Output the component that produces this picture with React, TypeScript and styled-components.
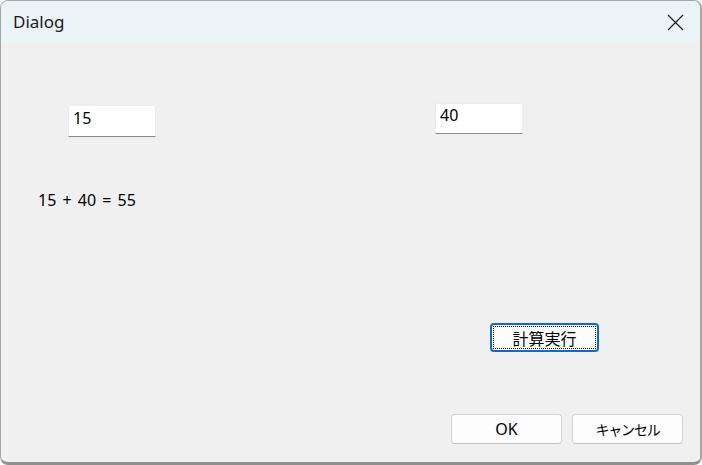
import React from 'react';
import styled, { createGlobalStyle } from 'styled-components';

const GlobalStyle = createGlobalStyle`
  html, body {
    margin: 0;
    padding: 0;
    background: #ffffff;
  }
  * {
    box-sizing: border-box;
  }
`;

const Window = styled.div`
  width: 702px;
  height: 465px;
  display: flex;
  flex-direction: column;
  background: #f0f0f0;
  border: 1px solid #a6a6a6;
  border-right-width: 2px;
  border-bottom: 3px solid #8f8f8f;
  border-radius: 8px;
  overflow: hidden;
  font-family: 'Noto Sans', 'Open Sans', sans-serif;
  color: #000;
`;

const TitleBar = styled.div`
  height: 43px;
  flex: none;
  display: flex;
  align-items: center;
  justify-content: space-between;
  padding: 0 16px 2px 12px;
  background: #ebf3f7;
`;

const Title = styled.span`
  font-size: 17px;
  color: #1b1b1b;
`;

const CloseButton = styled.button`
  width: 18px;
  height: 18px;
  padding: 0;
  border: none;
  background: transparent;
  display: flex;
  align-items: center;
  justify-content: center;
  margin-top: 2px;
`;

const Body = styled.div`
  flex: 1;
  display: flex;
  flex-direction: column;
  align-items: flex-start;
`;

const InputRow = styled.div`
  display: flex;
  align-items: flex-start;
  margin-top: 59px;
  padding-left: 67px;
`;

const NumberField = styled.input<{ $dy?: number; $gap?: number; $h?: number }>`
  width: 88px;
  height: ${p => p.$h ?? 32}px;
  margin-top: ${p => p.$dy ?? 0}px;
  margin-left: ${p => p.$gap ?? 0}px;
  padding: 0 0 7px 4px;
  border: 1px solid #ececec;
  border-bottom: 1px solid #898989;
  background: #ffffff;
  font-family: 'Noto Sans', 'Open Sans', sans-serif;
  font-size: 16px;
  color: #000;
  outline: none;
`;

const ResultLabel = styled.div`
  margin-top: 53px;
  margin-left: 37px;
  font-size: 16px;
  line-height: 20px;
  word-spacing: 2px;
`;

const ExecButton = styled.button`
  position: relative;
  width: 109px;
  height: 29px;
  margin-top: 113px;
  margin-left: 489px;
  padding: 0;
  border: 2px solid #0a6ccc;
  border-radius: 4px;
  background: #fdfdfd;
  font-family: 'Noto Sans CJK JP', sans-serif;
  font-size: 16px;
  color: #000;

  &::after {
    content: '';
    position: absolute;
    inset: 1px;
    border: 1px dotted #000;
  }
`;

const Footer = styled.div`
  margin-top: auto;
  align-self: stretch;
  display: flex;
  justify-content: flex-end;
  gap: 10px;
  padding: 0 17px 18px 0;
`;

const DialogButton = styled.button<{ $cjk?: boolean }>`
  width: 111px;
  height: 30px;
  padding: 0;
  border: 1px solid #d2d2d2;
  border-bottom-color: #c2c2c2;
  border-radius: 4px;
  background: #fdfdfd;
  font-family: ${p => (p.$cjk ? "'Noto Sans CJK JP', sans-serif" : "'Noto Sans', 'Open Sans', sans-serif")};
  font-size: ${p => (p.$cjk ? 14 : 16)}px;
  letter-spacing: ${p => (p.$cjk ? '-1.2px' : 'normal')};
  color: #000;
`;

const CloseIcon = () => (
  <svg width="17" height="17" viewBox="0 0 17 17">
    <path d="M1 1 L16 16 M16 1 L1 16" stroke="#1a1a1a" strokeWidth="1.2" fill="none" />
  </svg>
);

const App: React.FC = () => {
  return (
    <>
      <GlobalStyle />
      <Window>
        <TitleBar>
          <Title>Dialog</Title>
          <CloseButton aria-label="close">
            <CloseIcon />
          </CloseButton>
        </TitleBar>
        <Body>
          <InputRow>
            <NumberField $dy={2} defaultValue="15" readOnly />
            <NumberField $gap={279} $h={31} defaultValue="40" readOnly />
          </InputRow>
          <ResultLabel>15 + 40 = 55</ResultLabel>
          <ExecButton>計算実行</ExecButton>
          <Footer>
            <DialogButton>OK</DialogButton>
            <DialogButton $cjk>キャンセル</DialogButton>
          </Footer>
        </Body>
      </Window>
    </>
  );
};

export default App;
